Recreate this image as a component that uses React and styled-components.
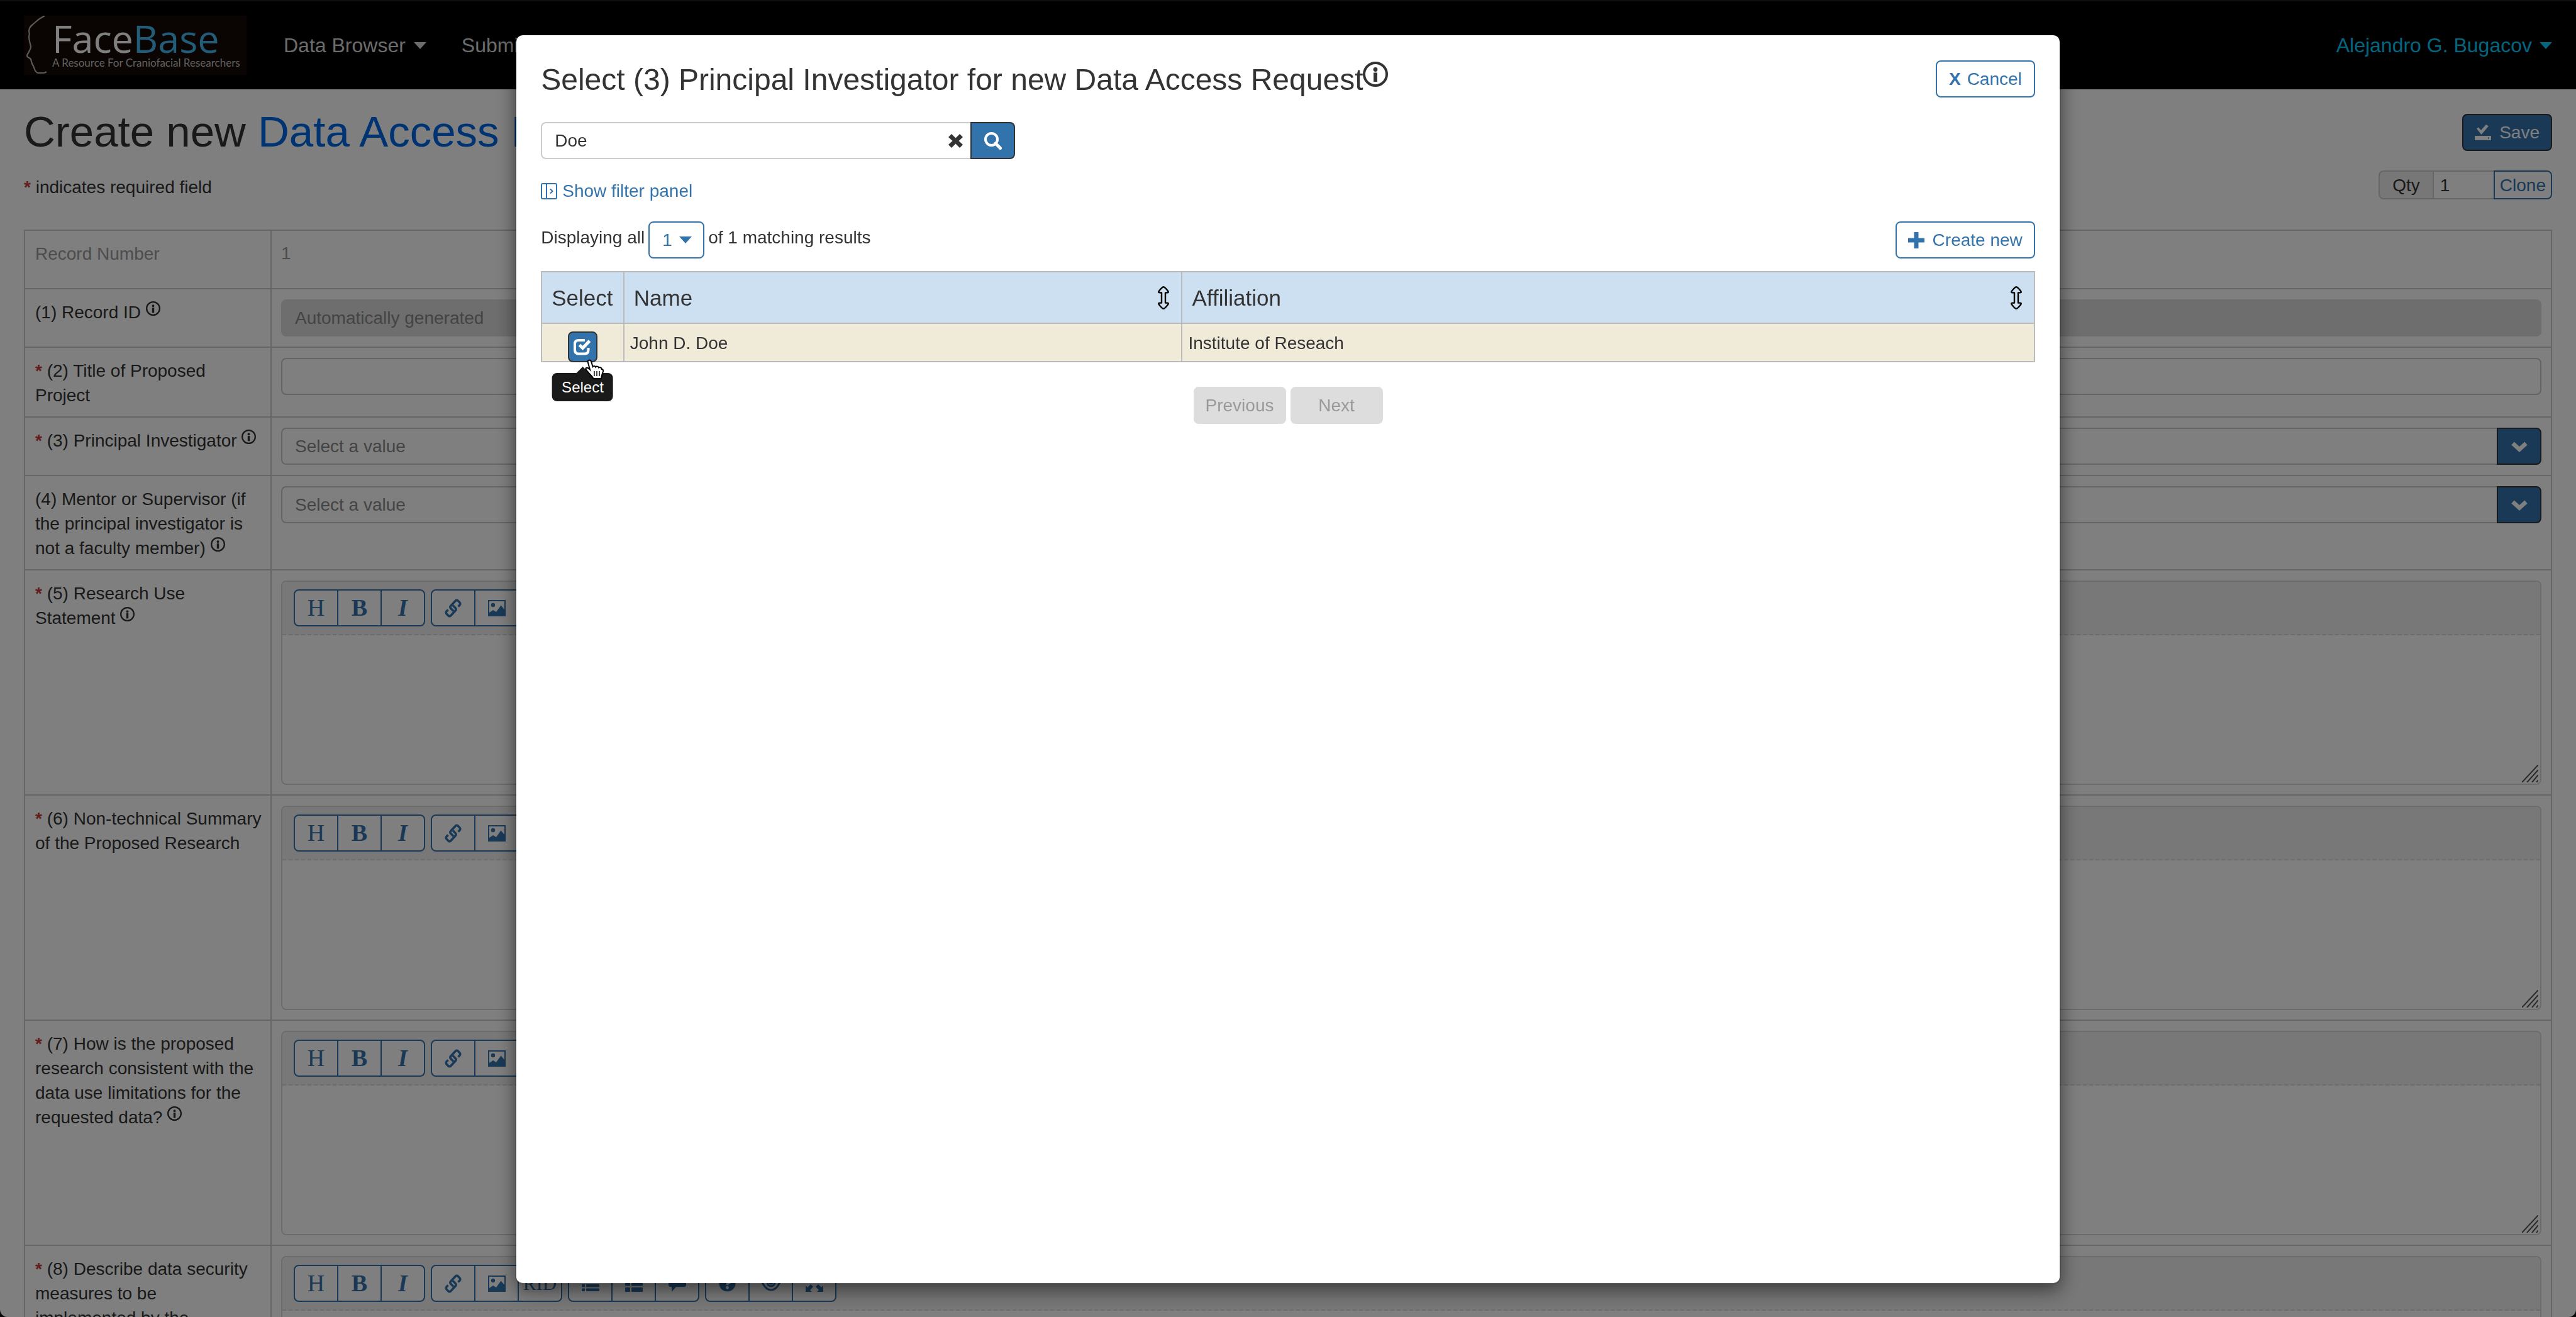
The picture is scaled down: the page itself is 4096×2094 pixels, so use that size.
import React from "react";
import styled, { createGlobalStyle, css } from "styled-components";
import { FaQuestionCircle } from "react-icons/fa";

const sans = '"Liberation Sans", Arial, sans-serif';
const serif = '"Liberation Serif", "Times New Roman", serif';
const blue = "#3373ac";
const ink = "#333";

const GlobalStyle = createGlobalStyle`
  *, *::before, *::after { box-sizing: border-box; }
  html { background: #111; }
  body {
    margin: 0;
    font-family: ${sans};
    font-size: 28px;
    line-height: 39px;
    color: ${ink};
  }
  button, input, select, textarea { font: inherit; color: inherit; margin: 0; }
  a { text-decoration: none; }
`;

/* ---------- page shell ---------- */

const Page = styled.div`
  height: 100vh;
  overflow: hidden;
  background: #fff;
  border-radius: 0 0 12px 12px;
`;

const Navbar = styled.header`
  display: flex;
  align-items: center;
  height: 142px;
  padding: 0 38px;
  background: #000;
  border-top: 2px solid #1c1c1c;
  font-size: 32px;
`;

const Logo = styled.a`
  display: flex;
  width: 354px;
  height: 94px;
  background: #140a06;
  color: #fff;
`;

const LogoText = styled.span`
  display: flex;
  flex-direction: column;
  padding-top: 5px;
  white-space: nowrap;
`;

const LogoName = styled.span`
  font: 500 61px/62px "Open Sans", sans-serif;
  em { font-style: normal; color: #46b8f0; }
`;

const LogoTag = styled.span`
  font: 17px/16px Lato, sans-serif;
  color: #c4c4c4;
`;

const Nav = styled.nav`
  display: flex;
  gap: 56px;
  margin-left: 59px;
`;

const NavLink = styled.a`
  display: flex;
  align-items: center;
  gap: ${(p) => (p.$end ? 12 : 13)}px;
  margin-left: ${(p) => (p.$end ? "auto" : "0")};
  color: ${(p) => (p.$end ? "#08caff" : "#d8d8d8")};
  white-space: nowrap;
`;

const Main = styled.main`
  padding: 30px 38px 0;
`;

const Row = styled.div`
  display: flex;
  justify-content: space-between;
  align-items: ${(p) => p.$align || "center"};
  margin-top: ${(p) => p.$top || 0}px;
`;

const PageTitle = styled.h1`
  margin: 0;
  font-size: 69px;
  line-height: 76px;
  font-weight: 400;
  a { color: #0066e4; }
`;

const Star = styled.span`
  color: #c43a3a;
  font-weight: 700;
`;

const Button = styled.button`
  display: inline-flex;
  align-items: center;
  justify-content: center;
  gap: ${(p) => p.$gap || 10}px;
  height: ${(p) => p.$height || 59}px;
  min-width: ${(p) => p.$width || 0}px;
  padding: 0 ${(p) => (p.$pad === undefined ? 18 : p.$pad)}px;
  border: 2px solid ${blue};
  border-radius: 8px;
  background: #fff;
  color: ${blue};
  white-space: nowrap;
  ${(p) =>
    p.$solid &&
    css`
      background: ${blue};
      border-color: ${ink};
      color: #fff;
    `}
  ${(p) => p.$joined && css`border-radius: 0 8px 8px 0;`}
  &:disabled {
    background: #ddd;
    border-color: #ddd;
    color: #999;
  }
`;

const Clone = styled.div`
  display: flex;
  height: 46px;
`;

const QtyLabel = styled.label`
  display: flex;
  align-items: center;
  padding: 0 20px;
  border: 2px solid #ccc;
  border-right: 0;
  border-radius: 8px 0 0 8px;
  background: #eee;
`;

const QtyInput = styled.input`
  width: 97px;
  padding: 0 10px;
  border: 2px solid #ccc;
  border-right: 0;
  background: #fff;
`;

/* ---------- entry form ---------- */

const Form = styled.form`
  display: flex;
  flex-direction: column;
  margin-top: 48px;
  border: 2px solid #ccc;
  border-top: 0;
`;

const FormRow = styled.div`
  display: grid;
  grid-template-columns: 390px 1fr;
  border-top: 2px solid #ccc;
  min-height: 93px;
`;

const FormLabel = styled.label`
  padding: 17px 8px 14px 16px;
  color: ${(p) => (p.$muted ? "#999" : ink)};
  white-space: pre-line;
`;

const FormCell = styled.div`
  display: flex;
  align-items: flex-start;
  padding: 16px 15px 15px;
  border-left: 2px solid #ccc;
  color: #999;
`;

const TextField = styled.input`
  flex: 1;
  min-width: 0;
  height: 59px;
  padding: 0 20px;
  border: 2px solid #c8c8c8;
  border-radius: ${(p) => (p.$joined ? "8px 0 0 8px" : "8px")};
  ${(p) => p.$joined && css`border-right: 0;`}
  background: #fff;
  &::placeholder { color: #888; opacity: 1; }
  &:disabled { background: #dcdcdc; border-color: #dcdcdc; }
`;

const Editor = styled.div`
  position: relative;
  flex: 1;
  border: 2px solid #d8d8d8;
  border-radius: 8px;
  background: #fff;
`;

const Toolbar = styled.div`
  display: flex;
  gap: 9px;
  padding: 12px 18px;
  border-bottom: 2px dashed #d8d8d8;
  border-radius: 8px 8px 0 0;
  background: #f1f1f1;
`;

const ToolGroup = styled.div`
  display: flex;
  height: 59px;
  border: 2px solid ${blue};
  border-radius: 8px;
  background: #fff;
  overflow: hidden;
`;

const Tool = styled.button`
  display: flex;
  align-items: center;
  justify-content: center;
  width: ${(p) => (p.$last ? 67 : 69)}px;
  padding: 0;
  border: 0;
  border-right: ${(p) => (p.$last ? "0" : `2px solid ${blue}`)};
  background: transparent;
  color: ${blue};
  font-family: ${serif};
  font-size: ${(p) => (p.$small ? 31 : 38)}px;
  font-weight: ${(p) => (p.$bold ? 700 : 400)};
  font-style: ${(p) => (p.$italic ? "italic" : "normal")};
`;

const EditArea = styled.textarea`
  display: block;
  width: 100%;
  height: 236px;
  padding: 12px 20px;
  border: 0;
  border-radius: 8px;
  background: transparent;
  resize: none;
`;

const Grip = styled.svg`
  position: absolute;
  right: 3px;
  bottom: 2px;
`;

/* ---------- dialog ---------- */

const Backdrop = styled.div`
  position: fixed;
  inset: 0;
  display: flex;
  justify-content: center;
  padding: 54px 0 52px;
  background: rgba(0, 0, 0, 0.5);
`;

const Dialog = styled.section`
  width: 60%;
  padding: 40px 39px;
  border: 2px solid rgba(0, 0, 0, 0.2);
  border-radius: 12px;
  background: #fff;
  background-clip: padding-box;
  box-shadow: 0 10px 30px rgba(0, 0, 0, 0.5);
`;

const DialogTitle = styled.h2`
  margin: 0;
  font-size: 48px;
  line-height: 52px;
  font-weight: 400;
`;

const SearchBox = styled.div`
  display: flex;
  width: 754px;
  margin-top: 39px;
`;

const SearchField = styled.div`
  flex: 1;
  display: flex;
  align-items: center;
  padding-right: 12px;
  border: 2px solid #ccc;
  border-right: 0;
  border-radius: 8px 0 0 8px;
`;

const SearchInput = styled.input`
  flex: 1;
  min-width: 0;
  padding: 0 20px;
  border: 0;
  background: transparent;
`;

const PlainButton = styled.button`
  display: flex;
  align-items: center;
  gap: 8px;
  margin-top: ${(p) => p.$top || 0}px;
  padding: 0;
  border: 0;
  background: none;
  color: ${(p) => (p.$link ? blue : ink)};
`;

const Summary = styled.div`
  display: flex;
  gap: 6px;
  line-height: 52px;
`;

const SizePicker = styled.span`
  position: relative;
  display: inline-flex;
  color: ${blue};
  svg { position: absolute; right: 20px; top: 24px; pointer-events: none; }
`;

const SizeSelect = styled.select`
  width: 89px;
  height: 59px;
  padding: 0 20px;
  border: 2px solid ${blue};
  border-radius: 8px;
  background: #fff;
  appearance: none;
`;

const Results = styled.table`
  width: 100%;
  margin-top: 20px;
  table-layout: fixed;
  border-collapse: collapse;
  border: 2px solid #bbb;
`;

const HeadCell = styled.th`
  width: ${(p) => p.$width || "auto"};
  height: 82px;
  padding: 0 15px;
  border: 2px solid #bbb;
  background: #cde0f1;
  font-size: 35px;
  font-weight: 400;
  text-align: left;
`;

const HeadInner = styled.div`
  display: flex;
  align-items: center;
  justify-content: space-between;
  padding-right: 4px;
`;

const Cell = styled.td`
  height: 61px;
  padding: 11px 9px 9px;
  border: 2px solid #bbb;
  background: #f0ead8;
  vertical-align: top;
`;

const PickCell = styled(Cell)`
  padding: 12px 0 0;
`;

const PickWrap = styled.div`
  position: relative;
  width: 47px;
  height: 47px;
  margin: 0 auto;
`;

const Tooltip = styled.span`
  position: absolute;
  top: 66px;
  left: 50%;
  transform: translateX(-50%);
  padding: 0 15px;
  border-radius: 8px;
  background: #1a1a1a;
  color: #fff;
  font-size: 24px;
  line-height: 45px;
  &::before {
    content: "";
    position: absolute;
    bottom: 100%;
    left: 50%;
    margin-left: -10px;
    border: 10px solid transparent;
    border-top: 0;
    border-bottom-color: #1a1a1a;
  }
`;

const Pointer = styled.svg`
  position: absolute;
  left: 25px;
  top: 43px;
`;

const Pager = styled.div`
  display: flex;
  justify-content: center;
  gap: 7px;
  margin-top: 39px;
`;

/* ---------- drawings ---------- */

const Caret = () => (
  <svg width="20" height="11" viewBox="0 0 20 11" aria-hidden="true">
    <path d="M0 0h20L10 11z" fill="currentColor" />
  </svg>
);

const InfoSvg = styled.svg`
  vertical-align: ${(p) => p.$lift}px;
`;

const Info = ({ size = 23, lift = 4 }) => (
  <InfoSvg $lift={lift} width={size} height={size} viewBox="0 0 40 40" aria-hidden="true">
    <circle cx="20" cy="20" r="18" fill="none" stroke="currentColor" strokeWidth="4" />
    <circle cx="20" cy="12.5" r="3.4" fill="currentColor" />
    <path d="M17 17.5h6V32h-6z" fill="currentColor" />
  </InfoSvg>
);

const HeadProfile = () => (
  <svg width="45" height="94" viewBox="0 0 45 94" aria-hidden="true">
    <path
      d="M33 0C30 2 26 4 22 7L14 14C10 17 8 21 8 25C9 28 9 30 8 33C8 39 10 44 11 49C11 54 7 58 5 63C4 66 8 66 11 69C12 73 12 76 15 80C17 84 17 89 22 91H31C33 91 35 90 36 89"
      fill="none"
      stroke="#b4b4b4"
      strokeWidth="2.2"
    />
  </svg>
);

const SaveIcon = () => (
  <svg width="26" height="25" viewBox="0 0 26 25" fill="currentColor" aria-hidden="true">
    <path d="M3 6.5L6 4.5L10 9L18 0L22 2.5L10.500 16z" />
    <path d="M0 18h26v7H0zM21 20.500v2h2v-2z" fillRule="evenodd" />
  </svg>
);

const ClearIcon = () => (
  <svg width="23" height="22" viewBox="0 0 23 22" fill="currentColor" aria-hidden="true">
    <path d="M5 0L11.500 6.500L18 0L23 5L16.500 11L23 17L18 22L11.500 15.500L5 22L0 17L6.500 11L0 5z" />
  </svg>
);

const SearchIcon = () => (
  <svg width="28" height="28" viewBox="0 0 28 28" fill="none" stroke="currentColor" aria-hidden="true">
    <circle cx="11.5" cy="11.500" r="9.500" strokeWidth="4" />
    <path d="M18 18l7.500 7.500" strokeWidth="5" strokeLinecap="round" />
  </svg>
);

const PanelIcon = () => (
  <svg width="26" height="26" viewBox="0 0 26 26" fill="none" stroke="currentColor" strokeWidth="2" aria-hidden="true">
    <rect x="1" y="1" width="24" height="24" rx="2" />
    <path d="M9 1v24M15 9.500l3.500 3.500l-3.500 3.500" />
  </svg>
);

const PlusIcon = () => (
  <svg width="26" height="26" viewBox="0 0 26 26" aria-hidden="true">
    <path d="M13 0v26M0 13h26" stroke="currentColor" strokeWidth="7" />
  </svg>
);

const SortIcon = () => (
  <svg width="18" height="37" viewBox="0 0 18 37" fill="none" stroke="#000" strokeWidth="2.4" strokeLinejoin="round" aria-hidden="true">
    <path d="M9 1.200C11 1.200 16.800 8 16.800 9.500C16.800 10.500 15 10.500 12 10.500V26.500C15 26.500 16.800 26.500 16.800 27.500C16.800 29 11 35.800 9 35.800S1.200 29 1.200 27.500C1.200 26.500 3 26.500 6 26.500V10.500C3 10.500 1.200 10.500 1.200 9.500C1.200 8 7 1.200 9 1.200z" />
  </svg>
);

const CheckIcon = () => (
  <svg width="28" height="27" viewBox="0 0 28 27" fill="none" stroke="currentColor" aria-hidden="true">
    <path d="M18 3H8Q2 3 2 9V18Q2 24.500 8 24.500H17.500Q23.500 24.500 23.500 18.500V15" strokeWidth="4" />
    <path d="M9.500 10.500L14.500 15.500L25.500 4" strokeWidth="5" />
  </svg>
);

const ChevronIcon = () => (
  <svg width="26" height="18" viewBox="0 0 26 18" fill="none" stroke="currentColor" aria-hidden="true">
    <path d="M2.500 4l10.500 9.500L23.500 4" strokeWidth="6.500" />
  </svg>
);

const HandIcon = () => (
  <Pointer width="34" height="36" viewBox="0 0 34 36" aria-hidden="true">
    <path
      d="M9 2.500C11 2.500 12 4 12.500 6L14.500 13C15.500 11.500 18.500 11.500 19 13.500C20.500 12 23.500 12.500 24 14.500C26 13.500 28.500 14.500 28.800 17C30.500 17 31.500 18.500 31 20.500C30 24 28.500 26 28 32H15.500C14 28 10 25.500 7 21.500C5.500 19.500 2.500 17.500 3.500 15.500C5 13.500 8 15.500 10 17.500L6.800 6C6.300 4.200 7 2.500 9 2.500z"
      fill="#fff"
      stroke="#000"
      strokeWidth="2"
    />
    <path d="M17 20v8M21 20v8M25 20v8" stroke="#333" strokeWidth="1.800" />
  </Pointer>
);

const LinkIcon = () => (
  <svg width="27" height="30" viewBox="0 0 27 30" fill="none" stroke="currentColor" strokeWidth="3.6" strokeLinejoin="round" aria-hidden="true">
    <path d="M14 19.500L9.500 15Q8 13 10 11L17.500 3Q19 1.500 21 3L24 6Q25.500 8 24 10L21.500 12.500" />
    <path d="M13 10.500L17.500 15Q19 17 17 19L9.500 27Q8 28.500 6 27L3 24Q1.500 22 3 20L5.500 17.500" />
  </svg>
);

const ImageIcon = () => (
  <svg width="28" height="26" viewBox="0 0 28 26" aria-hidden="true">
    <path fillRule="evenodd" fill="currentColor" d="M0 0h28v26H0zM2 2v18l6-4l5 3l7.500-10.500L26 15V2z" />
    <circle cx="8" cy="8" r="3.200" fill="currentColor" />
  </svg>
);

const ListIcon = ({ heavy }) => (
  <svg width="28" height="26" viewBox="0 0 28 26" fill="currentColor" aria-hidden="true">
    {(heavy ? [0, 9.5, 19] : [1, 7.5, 14, 20.5]).map((y) => (
      <g key={y}>
        <rect x="0" y={y} width={heavy ? 8 : 5} height={heavy ? 7 : 4.5} rx="1" />
        <rect x={heavy ? 10 : 7} y={y} width={heavy ? 18 : 21} height={heavy ? 7 : 4.5} rx="1" />
      </g>
    ))}
  </svg>
);

const CommentIcon = () => (
  <svg width="28" height="26" viewBox="0 0 28 26" aria-hidden="true">
    <path d="M3 0H25Q28 0 28 3V15Q28 18 25 18H12L5 26V18H3Q0 18 0 15V3Q0 0 3 0z" fill="currentColor" />
  </svg>
);

const EyeIcon = () => (
  <svg width="30" height="24" viewBox="0 0 30 24" fill="none" stroke="currentColor" strokeWidth="3" aria-hidden="true">
    <path d="M1.500 11Q8 1.500 15 1.500T28.500 11Q23 22 15 22T1.500 11z" />
    <circle cx="15" cy="10" r="6" />
    <circle cx="15" cy="10" r="2" />
  </svg>
);

const ExpandIcon = () => (
  <svg width="28" height="26" viewBox="0 0 28 26" fill="currentColor" aria-hidden="true">
    <path d="M0 0H10L7 3L12 8L8 12L3 7L0 10zM28 0H18L21 3L16 8L20 12L25 7L28 10zM0 26H10L7 23L12 18L8 14L3 19L0 16zM28 26H18L21 23L16 18L20 14L25 19L28 16z" />
  </svg>
);

/* ---------- composed parts ---------- */

const toolGroups = [
  [
    { name: "Heading", text: "H" },
    { name: "Bold", text: "B", bold: true },
    { name: "Italic", text: "I", bold: true, italic: true },
  ],
  [
    { name: "Link", icon: <LinkIcon /> },
    { name: "Image", icon: <ImageIcon /> },
    { name: "RID", text: "RID", small: true },
  ],
  [
    { name: "Bulleted list", icon: <ListIcon /> },
    { name: "Numbered list", icon: <ListIcon heavy /> },
    { name: "Comment", icon: <CommentIcon /> },
  ],
  [
    { name: "Help", icon: <FaQuestionCircle size={27} /> },
    { name: "Preview", icon: <EyeIcon /> },
    { name: "Full screen", icon: <ExpandIcon /> },
  ],
];

const MarkdownEditor = ({ id }) => (
  <Editor>
    <Toolbar>
      {toolGroups.map((group, i) => (
        <ToolGroup key={i}>
          {group.map((t, n) => (
            <Tool
              key={t.name}
              type="button"
              aria-label={t.name}
              $last={n === group.length - 1}
              $bold={t.bold}
              $italic={t.italic}
              $small={t.small}
            >
              {t.icon || t.text}
            </Tool>
          ))}
        </ToolGroup>
      ))}
    </Toolbar>
    <EditArea id={id} />
    <Grip width="26" height="28" viewBox="0 0 26 28" stroke="#555" strokeWidth="2" aria-hidden="true">
      <path d="M0 28L26 0M8 28L26 8M16 28L26 16M23 28L26 24" />
    </Grip>
  </Editor>
);

const fields = [
  { id: "record-number", label: "Record Number", kind: "static", value: "1", muted: true },
  { id: "record-id", label: "(1) Record ID", kind: "auto", info: true },
  { id: "title", label: "(2) Title of Proposed\nProject", kind: "text", required: true },
  { id: "investigator", label: "(3) Principal Investigator", kind: "lookup", required: true, info: true },
  { id: "mentor", label: "(4) Mentor or Supervisor (if the principal investigator is not a faculty member)", kind: "lookup", info: true },
  { id: "statement", label: "(5) Research Use\nStatement", kind: "editor", required: true, info: true },
  { id: "summary", label: "(6) Non-technical Summary of the Proposed Research", kind: "editor", required: true },
  { id: "limitations", label: "(7) How is the proposed research consistent with the data use limitations for the requested data?", kind: "editor", required: true, info: true },
  { id: "security", label: "(8) Describe data security\nmeasures to be\nimplemented by the", kind: "editor", required: true },
];

const Control = ({ field }) => {
  switch (field.kind) {
    case "static":
      return <output id={field.id}>{field.value}</output>;
    case "auto":
      return <TextField id={field.id} disabled placeholder="Automatically generated" />;
    case "text":
      return <TextField id={field.id} />;
    case "lookup":
      return (
        <>
          <TextField id={field.id} $joined placeholder="Select a value" />
          <Button type="button" $solid $joined $width={71} $pad={0} aria-label="Choose a value">
            <ChevronIcon />
          </Button>
        </>
      );
    default:
      return <MarkdownEditor id={field.id} />;
  }
};

export default function App() {
  return (
    <>
      <GlobalStyle />
      <Page>
        <Navbar>
          <Logo href="#home">
            <HeadProfile />
            <LogoText>
              <LogoName>Face<em>Base</em></LogoName>
              <LogoTag>A Resource For Craniofacial Researchers</LogoTag>
            </LogoText>
          </Logo>
          <Nav>
            <NavLink href="#browse">Data Browser <Caret /></NavLink>
            <NavLink href="#submit">Submit</NavLink>
          </Nav>
          <NavLink href="#account" $end>Alejandro G. Bugacov <Caret /></NavLink>
        </Navbar>
        <Main>
          <Row>
            <PageTitle>Create new <a href="#requests">Data Access Request</a></PageTitle>
            <Button type="button" $solid $gap={13}><SaveIcon />Save</Button>
          </Row>
          <Row $top={23} $align="flex-end">
            <span><Star>*</Star> indicates required field</span>
            <Clone>
              <QtyLabel htmlFor="qty">Qty</QtyLabel>
              <QtyInput id="qty" defaultValue="1" />
              <Button type="button" $joined $height={46} $pad={8}>Clone</Button>
            </Clone>
          </Row>
          <Form>
            {fields.map((f) => (
              <FormRow key={f.id}>
                <FormLabel htmlFor={f.id} $muted={f.muted}>
                  {f.required && <><Star>*</Star> </>}
                  {f.label}
                  {f.info && <> <Info /></>}
                </FormLabel>
                <FormCell><Control field={f} /></FormCell>
              </FormRow>
            ))}
          </Form>
        </Main>
      </Page>
      <Backdrop>
        <Dialog role="dialog" aria-labelledby="dialog-title">
          <Row>
            <DialogTitle id="dialog-title">
              Select (3) Principal Investigator for new Data Access Request<Info size={40} lift={5} />
            </DialogTitle>
            <Button type="button" $pad={19}><b>X</b>Cancel</Button>
          </Row>
          <SearchBox>
            <SearchField>
              <SearchInput aria-label="Search" defaultValue="Doe" />
              <PlainButton type="button" aria-label="Clear search"><ClearIcon /></PlainButton>
            </SearchField>
            <Button type="button" $solid $joined $width={71} $pad={0} aria-label="Run search"><SearchIcon /></Button>
          </SearchBox>
          <PlainButton type="button" $link $top={31}><PanelIcon />Show filter panel</PlainButton>
          <Row $top={29}>
            <Summary>
              <label htmlFor="page-size">Displaying all</label>
              <SizePicker>
                <SizeSelect id="page-size" defaultValue="1"><option>1</option></SizeSelect>
                <Caret />
              </SizePicker>
              <span>of 1 matching results</span>
            </Summary>
            <Button type="button" $gap={13}><PlusIcon />Create new</Button>
          </Row>
          <Results>
            <thead>
              <tr>
                <HeadCell $width="5.5%">Select</HeadCell>
                <HeadCell $width="37.4%"><HeadInner>Name<SortIcon /></HeadInner></HeadCell>
                <HeadCell><HeadInner>Affiliation<SortIcon /></HeadInner></HeadCell>
              </tr>
            </thead>
            <tbody>
              <tr>
                <PickCell>
                  <PickWrap>
                    <Button type="button" $solid $width={47} $height={49} $pad={0} aria-label="Select John D. Doe"><CheckIcon /></Button>
                    <Tooltip role="tooltip">Select</Tooltip>
                    <HandIcon />
                  </PickWrap>
                </PickCell>
                <Cell>John D. Doe</Cell>
                <Cell>Institute of Reseach</Cell>
              </tr>
            </tbody>
          </Results>
          <Pager>
            <Button type="button" disabled $width={147} $pad={10}>Previous</Button>
            <Button type="button" disabled $width={147} $pad={10}>Next</Button>
          </Pager>
        </Dialog>
      </Backdrop>
    </>
  );
}
